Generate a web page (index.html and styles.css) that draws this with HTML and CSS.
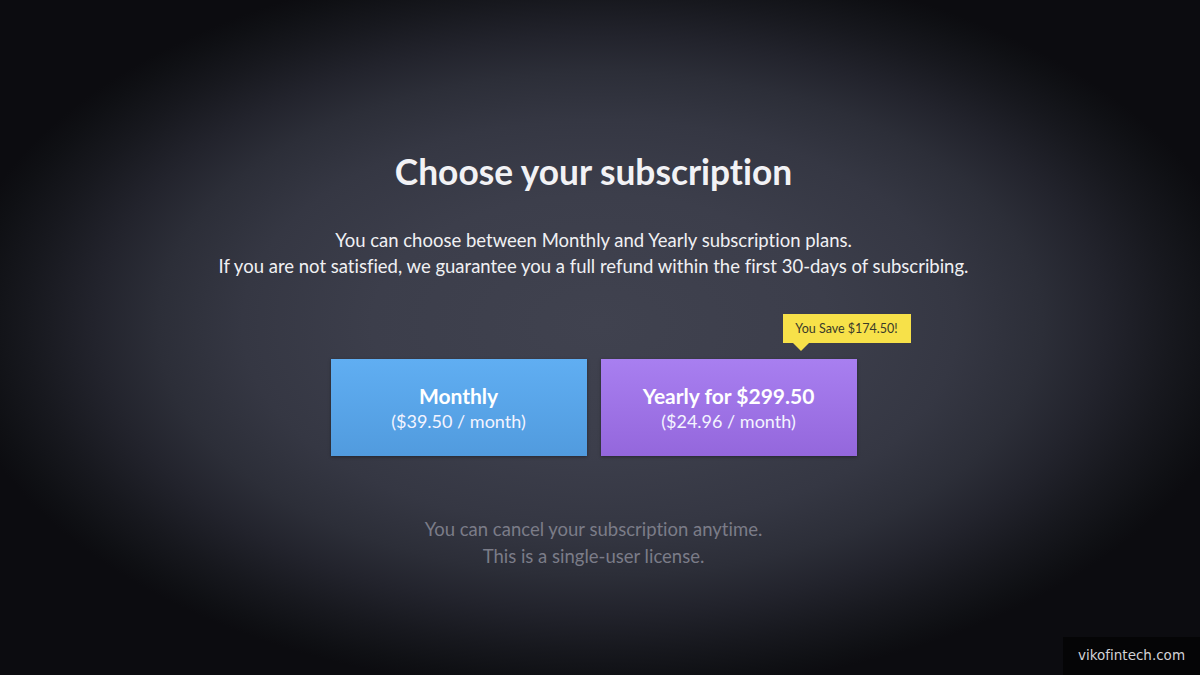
FILE: index.html
```html
<!DOCTYPE html>
<html>
<head>
<meta charset="utf-8">
<link rel="stylesheet" href="styles.css">
</head>
<body>
<main class="page">
  <h1 class="title">Choose your subscription</h1>
  <p class="intro">You can choose between Monthly and Yearly subscription plans.<br>If you are not satisfied, we guarantee you a full refund within the first 30-days of subscribing.</p>
  <div class="plans">
    <button class="plan plan-monthly">
      <span class="plan-name">Monthly</span>
      <span class="plan-price">($39.50 / month)</span>
    </button>
    <button class="plan plan-yearly">
      <span class="badge">You Save $174.50!</span>
      <span class="plan-name">Yearly for $299.50</span>
      <span class="plan-price">($24.96 / month)</span>
    </button>
  </div>
  <p class="note">You can cancel your subscription anytime.<br>This is a single-user license.</p>
</main>
<div class="watermark">vikofintech.com</div>
</body>
</html>
```
FILE: styles.css
```css
html, body {
  margin: 0;
  padding: 0;
  width: 1200px;
  height: 675px;
  overflow: hidden;
}
body {
  background: radial-gradient(ellipse 650px 370px at 50% 48%, #40424f 0%, #3c3e4b 35%, #353743 55%, #2c2e38 68%, #22232c 78%, #17181e 88%, #0f1014 96%, #0c0c10 100%);
  background-color: #0b0b0e;
  font-family: Lato, "Noto Sans", sans-serif;
  font-variant-ligatures: none;
  color: #f1f1f4;
  position: relative;
}
.page {
  display: flex;
  flex-direction: column;
  align-items: center;
  padding-top: 152px;
  padding-right: 13px;
}
.title {
  margin: 0;
  font-size: 35.3px;
  line-height: 40px;
  font-weight: 700;
  color: #f2f2f5;
}
.intro {
  margin: 35px 0 0;
  font-size: 18.5px;
  line-height: 26px;
  text-align: center;
  color: #f0f0f3;
}
.plans {
  display: flex;
  gap: 14px;
  margin-top: 80px;
}
.plan {
  position: relative;
  width: 256px;
  height: 97px;
  border: none;
  padding: 0;
  margin: 0;
  display: flex;
  flex-direction: column;
  align-items: center;
  justify-content: center;
  font-family: Lato, "Noto Sans", sans-serif;
  font-variant-ligatures: none;
  color: #ffffff;
  box-shadow: 0 1px 3px rgba(0,0,0,0.35);
}
.plan-monthly {
  background: linear-gradient(#60aef2, #519bde);
}
.plan-yearly {
  background: linear-gradient(#a87ff0, #9467dc);
}
.plan-name {
  font-size: 21px;
  font-weight: 700;
  line-height: 26px;
}
.plan-price {
  font-size: 18px;
  line-height: 24px;
  color: #f4f4ff;
}
.badge {
  position: absolute;
  top: -45px;
  left: 182px;
  width: 128px;
  height: 29px;
  box-sizing: border-box;
  background: #f7e149;
  color: #3a3a2a;
  font-size: 12.5px;
  line-height: 29px;
  text-align: center;
  white-space: nowrap;
}
.badge::after {
  content: "";
  position: absolute;
  left: 10px;
  bottom: -8px;
  border-left: 8px solid transparent;
  border-right: 8px solid transparent;
  border-top: 8px solid #f7e149;
}
.note {
  margin: 60px 0 0;
  font-size: 18.5px;
  line-height: 27px;
  text-align: center;
  color: #7b7c88;
}
.watermark {
  position: absolute;
  right: 0;
  bottom: 0;
  width: 137px;
  height: 38px;
  background: #050506;
  color: #d2d2d6;
  font-family: "DejaVu Sans", sans-serif;
  font-size: 13.5px;
  line-height: 36px;
  text-align: center;
}
```
